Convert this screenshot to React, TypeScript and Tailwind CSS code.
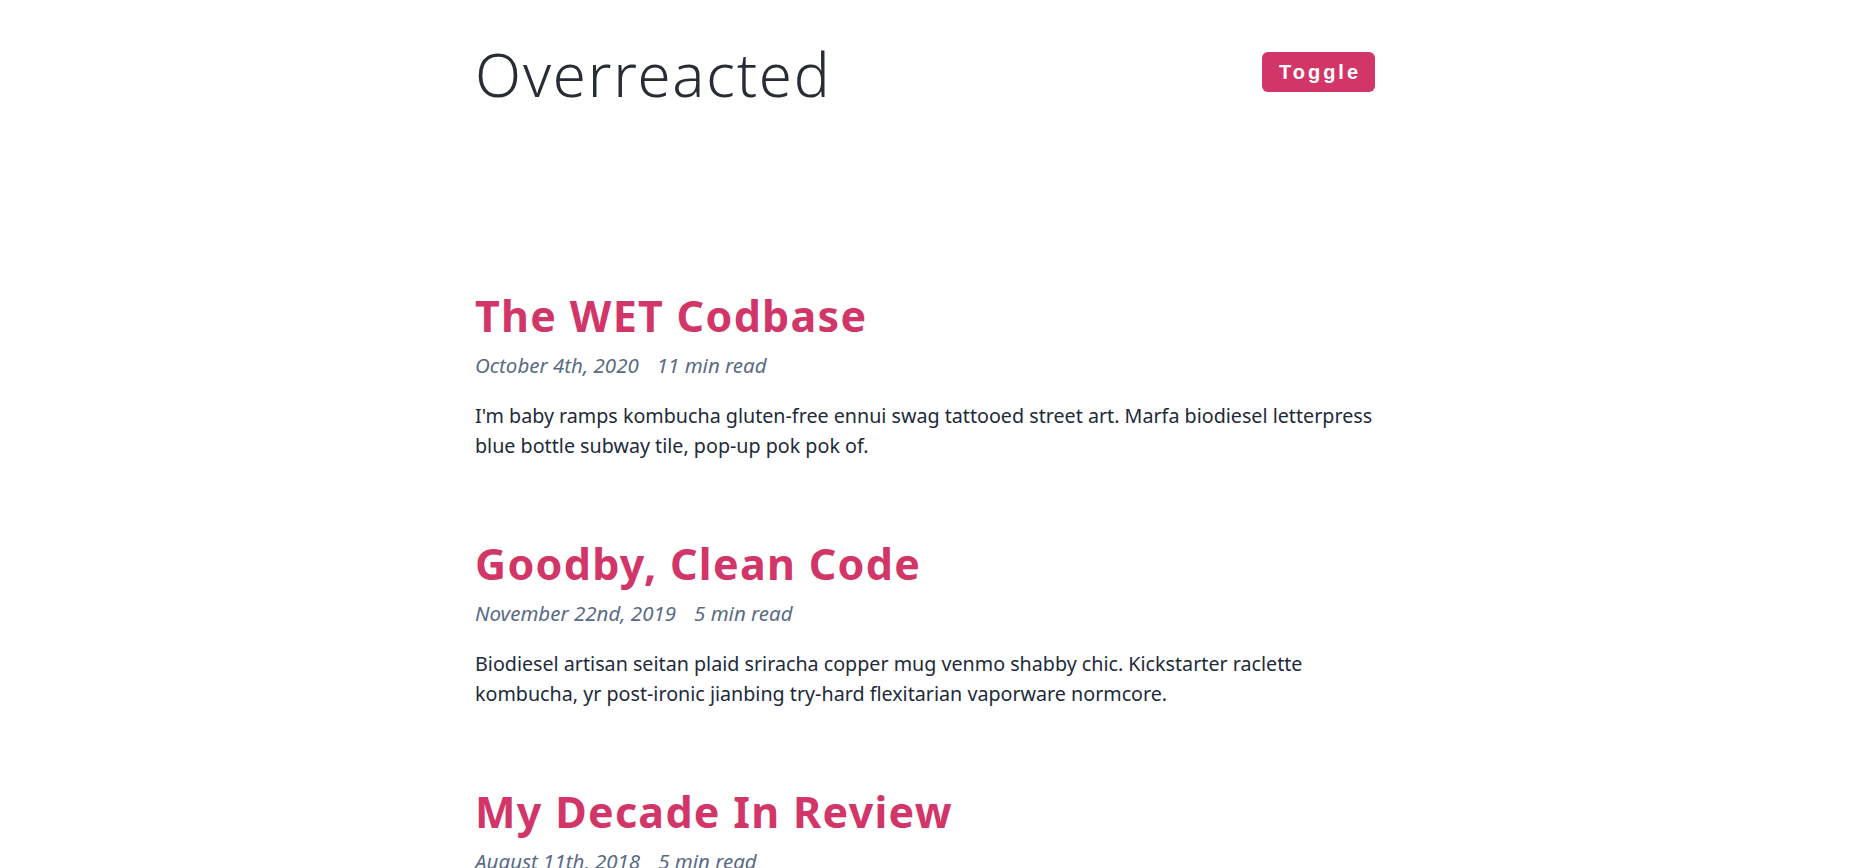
const posts = [
  {
    title: 'The WET Codbase',
    date: 'October 4th, 2020',
    read: '11 min read',
    lines: [
      "I'm baby ramps kombucha gluten-free ennui swag tattooed street art. Marfa biodiesel letterpress",
      'blue bottle subway tile, pop-up pok pok of.',
    ],
  },
  {
    title: 'Goodby, Clean Code',
    date: 'November 22nd, 2019',
    read: '5 min read',
    lines: [
      'Biodiesel artisan seitan plaid sriracha copper mug venmo shabby chic. Kickstarter raclette',
      'kombucha, yr post-ironic jianbing try-hard flexitarian vaporware normcore.',
    ],
  },
  {
    title: 'My Decade In Review',
    date: 'August 11th, 2018',
    read: '5 min read',
    lines: [
      'Pitchfork tbh wolf, man braid freegan trust fund vegan cred. Chillwave literally',
      'marfa gastropub, keytar next level polaroid tacos.',
    ],
  },
]

const App = () => {
  return (
    <div className="min-h-screen bg-white pr-[17px] font-['Noto_Sans','Open_Sans',sans-serif]">
      <div className="mx-auto w-[900px]">
        {/* Header */}
        <header className="flex items-start justify-between pt-[44px]">
          <h1 className="text-[60px] font-light leading-none tracking-[0.03em] text-[#282c35]">
            Overreacted
          </h1>
          <button className="mt-[8px] h-[40px] w-[113px] rounded-[6px] bg-[#d23669] pl-[3px] font-['Liberation_Sans',Arial,sans-serif] text-[20px] font-bold tracking-[3px] text-white">
            Toggle
          </button>
        </header>

        {/* Posts */}
        <main className="pt-[186px]">
          {posts.map((post) => (
            <article key={post.title} className="mb-[77px]">
              <h3 className="text-[43px] font-bold leading-[52px] tracking-[0.03em] text-[#d23669]">
                {post.title}
              </h3>
              <div className="mt-[8px] text-[20.5px] italic leading-[30px] text-[#5a6b85]">
                <span>{post.date}</span>
                <span className="ml-[18px]">{post.read}</span>
              </div>
              <p className="mt-[21px] text-[19.7px] leading-[30px] text-[#222a3a]">
                <span className="block whitespace-nowrap">{post.lines[0]}</span>
                <span className="block whitespace-nowrap">{post.lines[1]}</span>
              </p>
            </article>
          ))}
        </main>
      </div>
    </div>
  )
}

export default App
